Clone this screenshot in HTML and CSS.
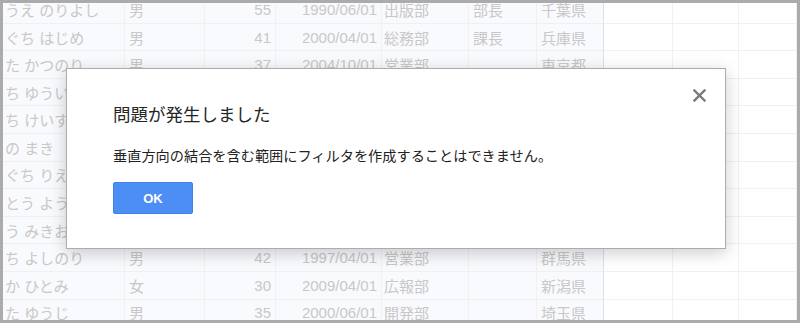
FILE: index.html
```html
<!DOCTYPE html>
<html lang="ja">
<head>
<meta charset="utf-8">
<link rel="stylesheet" href="styles.css">
</head>
<body>
<div class="frame">
  <div class="sheet">
    <div class="c a s">うえ のりよし</div><div class="c s">男</div><div class="c n s">55</div><div class="c n s">1990/06/01</div><div class="c e s">出版部</div><div class="c s">部長</div><div class="c g s">千葉県</div><div class="c"></div><div class="c"></div><div class="c"></div>
    <div class="c a s">ぐち はじめ</div><div class="c s">男</div><div class="c n s">41</div><div class="c n s">2000/04/01</div><div class="c e s">総務部</div><div class="c s">課長</div><div class="c g s">兵庫県</div><div class="c"></div><div class="c"></div><div class="c"></div>
    <div class="c a s">た かつのり</div><div class="c s">男</div><div class="c n s">37</div><div class="c n s">2004/10/01</div><div class="c e s">営業部</div><div class="c s"></div><div class="c g s">東京都</div><div class="c"></div><div class="c"></div><div class="c"></div>
    <div class="c a s">ち ゆうい</div><div class="c s"></div><div class="c n s"></div><div class="c n s"></div><div class="c e s"></div><div class="c s"></div><div class="c g s"></div><div class="c"></div><div class="c"></div><div class="c"></div>
    <div class="c a s">ち けいす</div><div class="c s"></div><div class="c n s"></div><div class="c n s"></div><div class="c e s"></div><div class="c s"></div><div class="c g s"></div><div class="c"></div><div class="c"></div><div class="c"></div>
    <div class="c a s">の まき</div><div class="c s"></div><div class="c n s"></div><div class="c n s"></div><div class="c e s"></div><div class="c s"></div><div class="c g s"></div><div class="c"></div><div class="c"></div><div class="c"></div>
    <div class="c a s">ぐち りえ</div><div class="c s"></div><div class="c n s"></div><div class="c n s"></div><div class="c e s"></div><div class="c s"></div><div class="c g s"></div><div class="c"></div><div class="c"></div><div class="c"></div>
    <div class="c a s">とう よう</div><div class="c s"></div><div class="c n s"></div><div class="c n s"></div><div class="c e s"></div><div class="c s"></div><div class="c g s"></div><div class="c"></div><div class="c"></div><div class="c"></div>
    <div class="c a s">う みきお</div><div class="c s"></div><div class="c n s"></div><div class="c n s"></div><div class="c e s"></div><div class="c s"></div><div class="c g s"></div><div class="c"></div><div class="c"></div><div class="c"></div>
    <div class="c a s">ち よしのり</div><div class="c s">男</div><div class="c n s">42</div><div class="c n s">1997/04/01</div><div class="c e s">営業部</div><div class="c s"></div><div class="c g s">群馬県</div><div class="c"></div><div class="c"></div><div class="c"></div>
    <div class="c a s">か ひとみ</div><div class="c s">女</div><div class="c n s">30</div><div class="c n s">2009/04/01</div><div class="c e s">広報部</div><div class="c s"></div><div class="c g s">新潟県</div><div class="c"></div><div class="c"></div><div class="c"></div>
    <div class="c a s">た ゆうじ</div><div class="c s">男</div><div class="c n s">35</div><div class="c n s">2000/06/01</div><div class="c e s">開発部</div><div class="c s"></div><div class="c g s">埼玉県</div><div class="c"></div><div class="c"></div><div class="c"></div>
  </div>

  <div class="dialog">
    <button class="close" aria-label="閉じる">
      <svg width="13" height="13" viewBox="0 0 13 13"><path d="M1.5 1.5 L11.5 11.5 M11.5 1.5 L1.5 11.5" stroke="#7a7a7a" stroke-width="2.4" stroke-linecap="square" fill="none"/></svg>
    </button>
    <div class="title">問題が発生しました</div>
    <div class="msg">垂直方向の結合を含む範囲にフィルタを作成することはできません。</div>
    <div class="actions"><button class="ok">OK</button></div>
  </div>
</div>
</body>
</html>
```

FILE: styles.css
```css
html, body {
  margin: 0;
  padding: 0;
  background: #fff;
}
.frame {
  position: relative;
  width: 800px;
  height: 323px;
  box-sizing: border-box;
  border: 3px solid #ababab;
  overflow: hidden;
  background: #fff;
}
.sheet {
  margin-top: -6.9px;
  display: grid;
  grid-template-columns: 122px 80px 71px 106px 87px 68px 67px 69px 66px 1fr;
  grid-auto-rows: 27.6px;
  font-family: "Liberation Sans", "Noto Sans CJK JP", sans-serif;
  font-size: 15px;
  color: #c8c8c8;
}
.c {
  box-sizing: border-box;
  border-right: 1px solid #f0f1f3;
  border-bottom: 1px solid #eff0f2;
  padding: 0 4px;
  display: flex;
  align-items: center;
  white-space: nowrap;
  overflow: hidden;
}
.c.s {
  background: #f9fafd;
}
.c.a {
  padding-left: 2px;
}
.c.n {
  justify-content: flex-end;
}
.c.e {
  padding-left: 2px;
}
.c.g {
  border-right-color: #d8e0ee;
}
.dialog {
  position: absolute;
  left: 63px;
  top: 65px;
  width: 660px;
  height: 181px;
  box-sizing: border-box;
  background: #fff;
  border: 1px solid #acacac;
  box-shadow: 0 4px 16px rgba(0, 0, 0, 0.2);
  padding: 34px 46px 0 46px;
  font-family: "Liberation Sans", "Noto Sans CJK JP", sans-serif;
}
.close {
  position: absolute;
  right: 19px;
  top: 20px;
  width: 13px;
  height: 13px;
  padding: 0;
  border: 0;
  background: none;
  display: flex;
}
.title {
  font-size: 17.5px;
  line-height: 24px;
  color: #262626;
}
.msg {
  margin-top: 20px;
  font-size: 14.2px;
  line-height: 18px;
  color: #222;
}
.actions {
  margin-top: 17px;
  display: flex;
}
.ok {
  width: 80px;
  height: 32px;
  box-sizing: border-box;
  background: #4d8ef5;
  border: 1px solid #3f82ec;
  border-radius: 2px;
  color: #fff;
  font-family: "Liberation Sans", Arial, sans-serif;
  font-weight: bold;
  font-size: 13px;
  padding: 0;
}
```
